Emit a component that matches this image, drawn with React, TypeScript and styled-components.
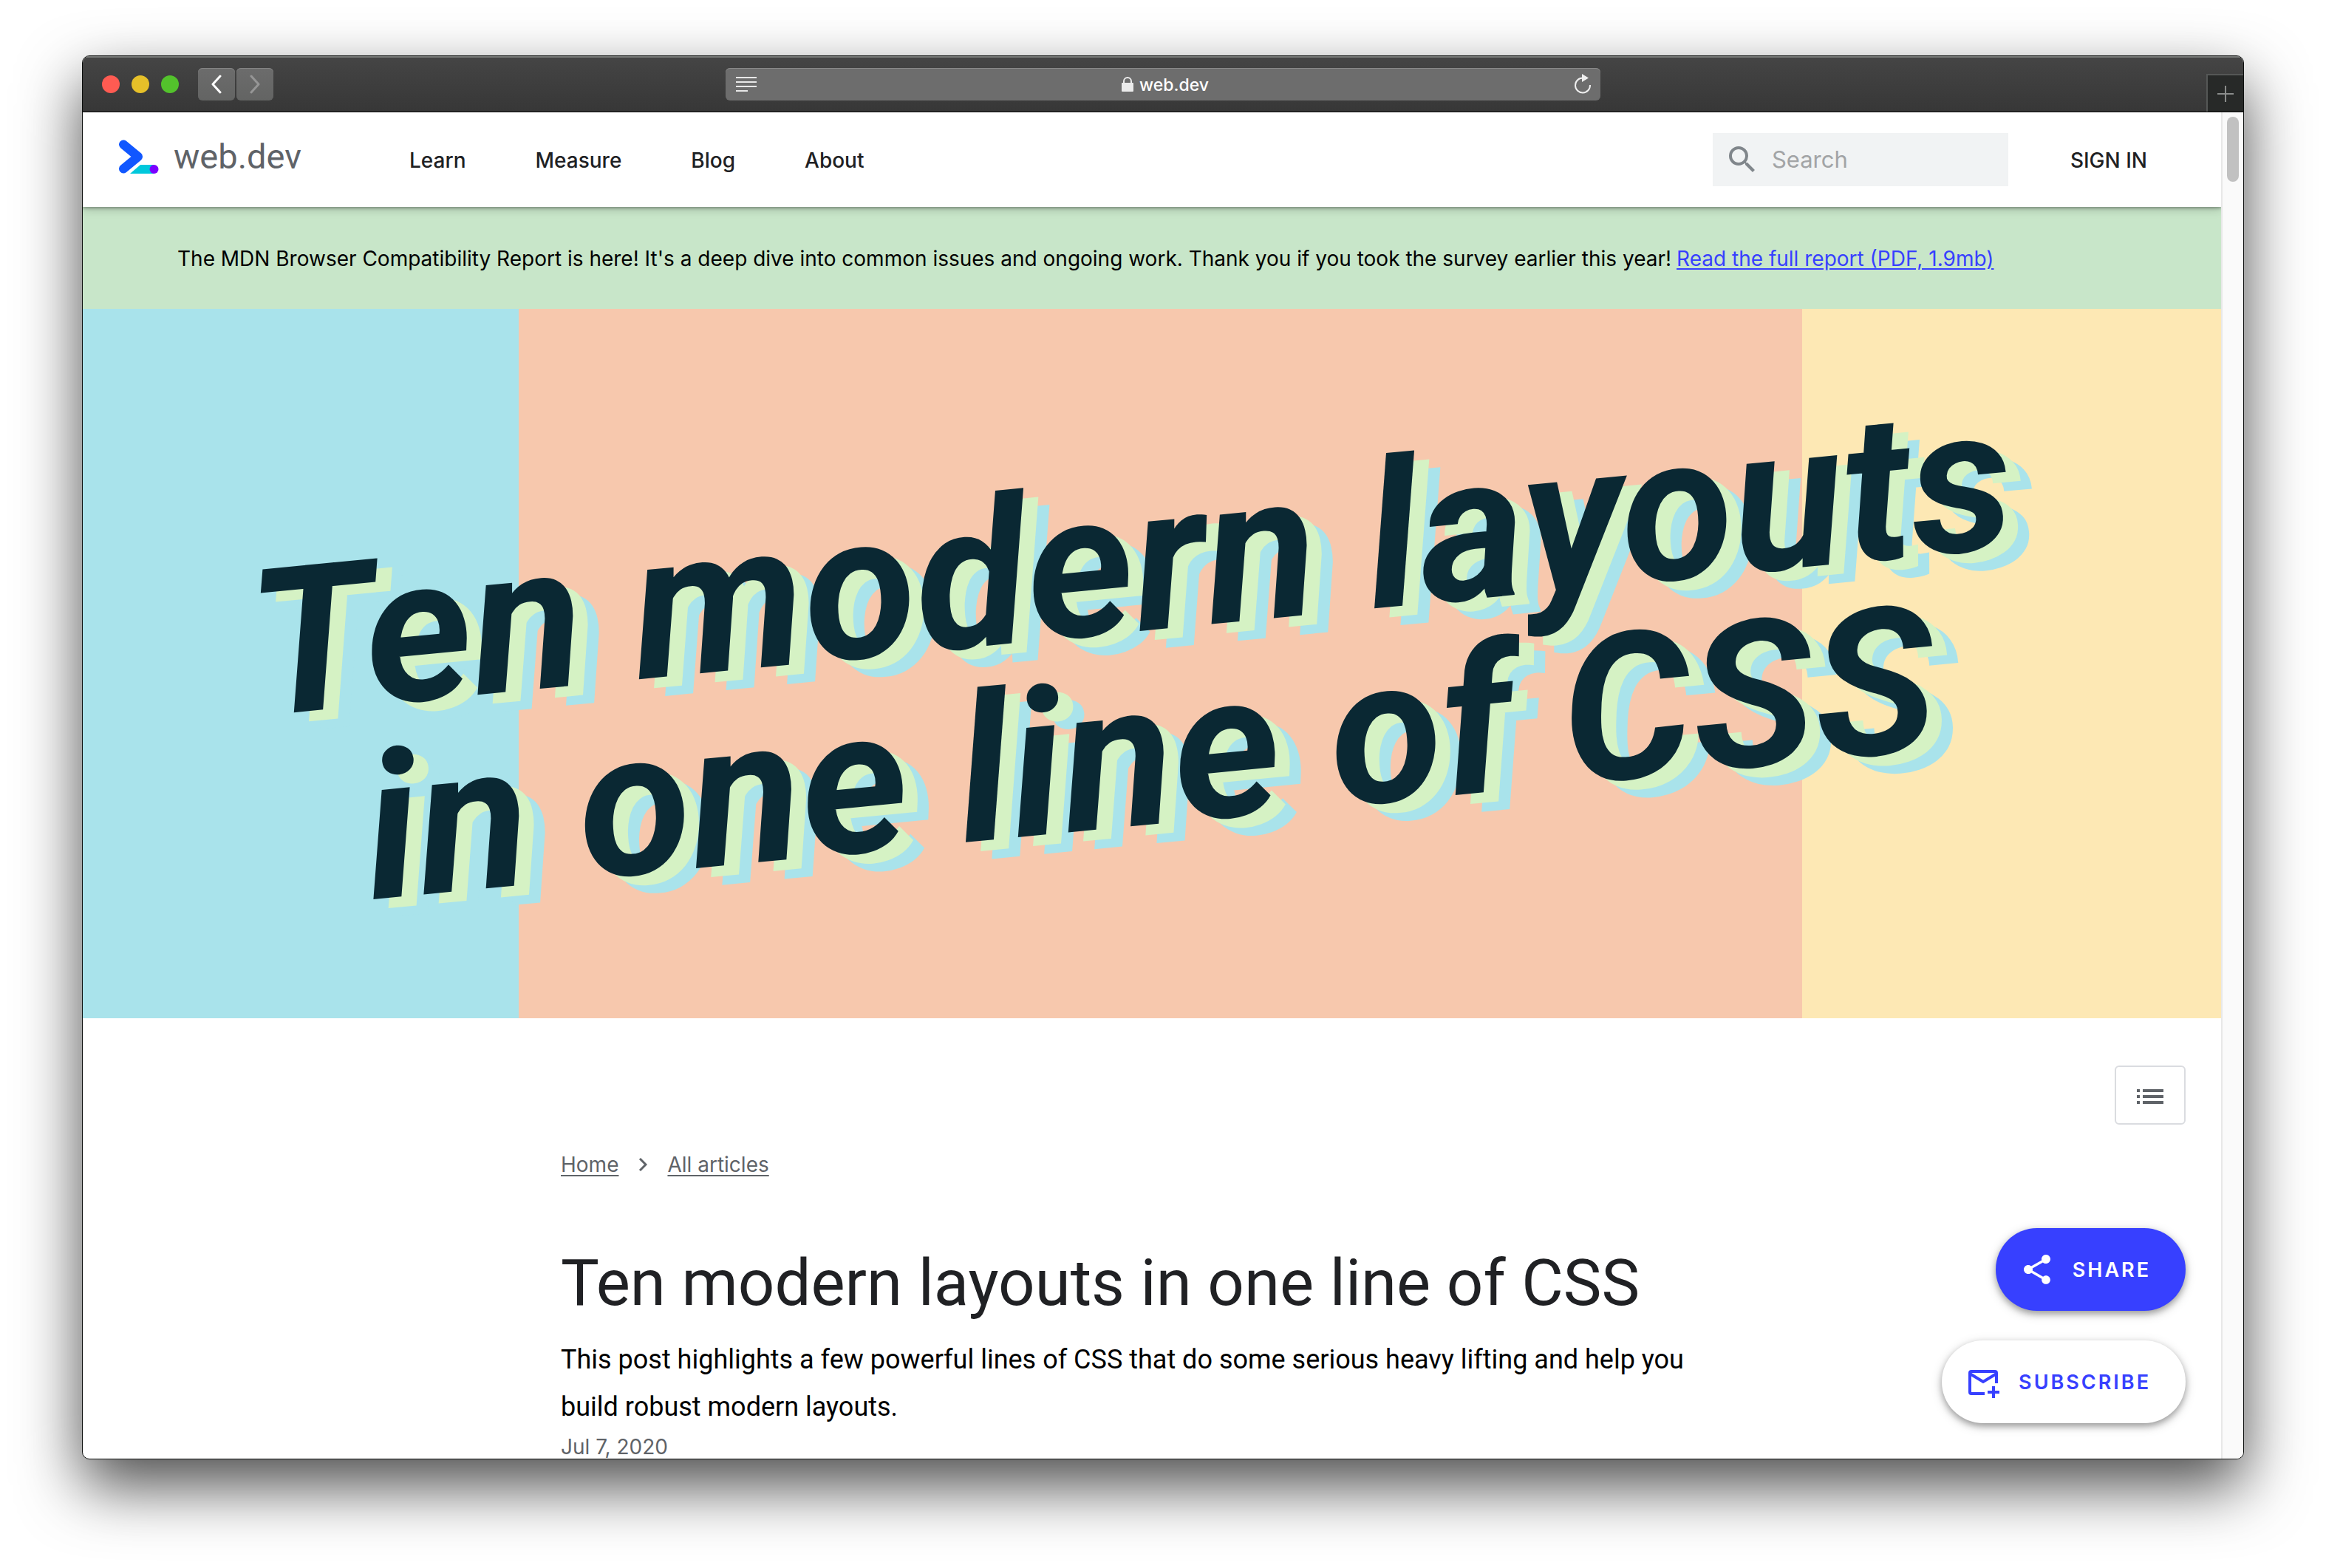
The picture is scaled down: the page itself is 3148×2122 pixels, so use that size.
import React from 'react';
import styled, { createGlobalStyle } from 'styled-components';

const uiFont = 'Inter, "Liberation Sans", sans-serif';
const displayFont = 'Roboto, "Liberation Sans", sans-serif';

const GlobalStyle = createGlobalStyle`
  *, *::before, *::after { box-sizing: border-box; }
  body { margin: 0; background: #ffffff; font-family: ${uiFont}; }
  h1, h2, p, ol { margin: 0; padding: 0; }
  a { color: inherit; }
  button { font: inherit; margin: 0; padding: 0; border: 0; cursor: pointer; }
`;

const Desktop = styled.div`
  height: 100vh;
  padding: 75px 111px 147px;
  display: flex;
`;

const BrowserWindow = styled.div`
  flex: 1;
  min-width: 0;
  display: flex;
  flex-direction: column;
  overflow: hidden;
  border: 1px solid #0c0e0d;
  border-radius: 10px;
  background: #ffffff;
  box-shadow: 0 36px 84px rgba(0, 0, 0, 0.7);
`;

const Toolbar = styled.div`
  flex: none;
  height: 76px;
  display: grid;
  grid-template-columns: 1fr 1184px 1fr;
  align-items: center;
  background: linear-gradient(#454545, #373737);
  border-bottom: 1px solid #000000;
  box-shadow: inset 0 2px 0 #767876;
`;

const ToolbarStart = styled.div`
  display: flex;
  align-items: center;
  padding-left: 26px;
`;

const Lights = styled.div`
  display: flex;
  gap: 16px;
  margin-right: 26px;
`;

const Light = styled.button<{ $color: string }>`
  width: 24px;
  height: 24px;
  border-radius: 50%;
  background: ${(p) => p.$color};
`;

const HistoryButtons = styled.div`
  display: flex;
  gap: 2px;
`;

const HistoryButton = styled.button`
  width: 50px;
  height: 44px;
  display: grid;
  place-items: center;
  border-radius: 6px;
  background: linear-gradient(#6c6c6c, #636463);
  box-shadow: inset 0 1px 0 #858585;
`;

const AddressBar = styled.div`
  height: 44px;
  padding: 0 12px 0 14px;
  display: flex;
  align-items: center;
  justify-content: space-between;
  border-radius: 6px;
  background: #6d6d6d;
  box-shadow: inset 0 1px 0 #8a8a8a;
`;

const BarButton = styled.button`
  display: flex;
  background: none;
`;

const Address = styled.div`
  padding-top: 2px;
  display: flex;
  align-items: center;
  gap: 8px;
  color: #ffffff;
  font-size: 23px;
  font-weight: 500;
  line-height: 32px;
`;

const NewTab = styled.button`
  justify-self: end;
  align-self: end;
  width: 50px;
  height: 51px;
  display: grid;
  place-items: center;
  background: #272928;
  border-top: 2px solid #555756;
  border-left: 2px solid #555756;
`;

const Viewport = styled.div`
  position: relative;
  flex: 1;
  min-height: 0;
  display: flex;
`;

const Page = styled.div`
  flex: 1;
  min-width: 0;
  overflow: hidden;
`;

const ScrollTrack = styled.div`
  flex: none;
  width: 30px;
  padding: 6px;
  background: #fafafa;
  border-left: 2px solid #e8e8e8;
`;

const ScrollThumb = styled.div`
  width: 16px;
  height: 88px;
  border-radius: 8px;
  background: #c1c1c1;
`;

const SiteHeader = styled.header`
  position: relative;
  height: 128px;
  padding: 0 48px;
  display: flex;
  align-items: center;
  background: #ffffff;
  box-shadow: 0 2px 4px rgba(0, 0, 0, 0.3), 0 4px 12px rgba(0, 0, 0, 0.16);
`;

const Brand = styled.a`
  width: 394px;
  padding-bottom: 8px;
  display: flex;
  align-items: center;
  gap: 20px;
  color: #5f6368;
  font: 400 47px/56px ${displayFont};
  text-decoration: none;
`;

const SiteNav = styled.nav`
  flex: 1;
  display: flex;
  gap: 94px;
`;

const NavLink = styled.a`
  padding-top: 2px;
  color: #202124;
  font-size: 28px;
  font-weight: 500;
  line-height: 40px;
  text-decoration: none;
`;

const SearchBox = styled.label`
  width: 400px;
  height: 72px;
  margin-right: 84px;
  padding-left: 16px;
  display: flex;
  align-items: center;
  gap: 16px;
  background: #f1f3f4;
`;

const SearchInput = styled.input`
  flex: 1;
  min-width: 0;
  height: 48px;
  padding: 0;
  border: 0;
  outline: 0;
  background: none;
  font: 400 31px/48px ${uiFont};
  color: #202124;
  &::placeholder { color: #a2a4a6; opacity: 1; }
`;

const SignIn = styled(NavLink)`
  margin-right: 52px;
`;

const Notice = styled.p`
  height: 138px;
  padding: 2px 128px 0;
  display: flex;
  align-items: center;
  gap: 7px;
  background: #c8e6c9;
  color: #000000;
  font-size: 28px;
  line-height: 48px;
  white-space: nowrap;
  a { color: #3740ff; text-underline-offset: 3px; }
`;

const Hero = styled.div`
  height: 960px;
  padding: 0 32px 14px 0;
  display: flex;
  align-items: center;
  justify-content: center;
  overflow: hidden;
  background: linear-gradient(
    to right,
    #a9e3eb 0 20.4%,
    #f7c8ad 20.4% 80.4%,
    #fde8b4 80.4%
  );
`;

const HeroTitle = styled.p`
  color: #0a2833;
  font: italic 700 277px/262px ${displayFont};
  text-align: center;
  white-space: nowrap;
  transform: rotate(-5.5deg);
  text-shadow: 19px 14px 0 #d5f2c4, 33px 26px 0 #a9e3eb;
`;

const TocRow = styled.div`
  display: flex;
  justify-content: flex-end;
  padding: 64px 48px 0;
`;

const TocButton = styled.button`
  width: 96px;
  height: 80px;
  padding-top: 4px;
  display: grid;
  place-items: center;
  background: #ffffff;
  border: 2px solid #dadce0;
  border-radius: 6px;
`;

const Article = styled.article`
  max-width: 1600px;
  margin: 0 auto;
  padding-top: 34px;
`;

const Crumbs = styled.nav`
  display: flex;
  align-items: center;
  gap: 27px;
  color: #5f6368;
  font-size: 28px;
  line-height: 40px;
  a { text-underline-offset: 4px; text-decoration-thickness: 2px; }
`;

const Title = styled.h1`
  margin-top: 84px;
  color: #202124;
  font: 400 87px/112px ${displayFont};
`;

const Lead = styled.p`
  margin-top: 16px;
  color: #000000;
  font: 400 36px/64px ${displayFont};
`;

const Published = styled.p`
  color: #5f6368;
  font-size: 28px;
  line-height: 44px;
`;

const FloatingActions = styled.div`
  position: absolute;
  right: 78px;
  bottom: 48px;
  display: flex;
  flex-direction: column;
  align-items: flex-end;
  gap: 40px;
`;

const Fab = styled.button<{ $primary?: boolean }>`
  height: 112px;
  padding: 0 47px 0 32px;
  display: flex;
  align-items: center;
  gap: 24px;
  border-radius: 56px;
  background: ${(p) => (p.$primary ? '#3740ff' : '#ffffff')};
  color: ${(p) => (p.$primary ? '#ffffff' : '#3740ff')};
  font-size: 27px;
  font-weight: 600;
  line-height: 40px;
  letter-spacing: 3px;
  box-shadow: 0 4px 8px rgba(0, 0, 0, 0.3), 0 4px 16px rgba(0, 0, 0, 0.16);
`;

const FabLabel = styled.span`
  padding-top: 2px;
`;

const navItems = ['Learn', 'Measure', 'Blog', 'About'];

export default function App() {
  return (
    <>
      <GlobalStyle />
      <Desktop>
        <BrowserWindow>
          <Toolbar>
            <ToolbarStart>
              <Lights>
                <Light $color="#ff5b52" aria-label="Close" />
                <Light $color="#e6c029" aria-label="Minimise" />
                <Light $color="#53c22c" aria-label="Zoom" />
              </Lights>
              <HistoryButtons>
                <HistoryButton aria-label="Back">
                  <svg width="16" height="26" viewBox="0 0 16 26" fill="none" stroke="#ffffff" strokeWidth="3" strokeLinecap="round" strokeLinejoin="round">
                    <path d="M13 2L3 13l10 11" />
                  </svg>
                </HistoryButton>
                <HistoryButton aria-label="Forward">
                  <svg width="16" height="26" viewBox="0 0 16 26" fill="none" stroke="#969696" strokeWidth="3" strokeLinecap="round" strokeLinejoin="round">
                    <path d="M3 2l10 11L3 24" />
                  </svg>
                </HistoryButton>
              </HistoryButtons>
            </ToolbarStart>
            <AddressBar>
              <BarButton aria-label="Reader view">
                <svg width="28" height="20" viewBox="0 0 28 20" fill="#e8e8e8">
                  <path d="M0 0h28v2H0zM0 6h28v2H0zM0 12h28v2H0zM0 18h16v2H0z" />
                </svg>
              </BarButton>
              <Address>
                <svg width="16" height="22" viewBox="0 0 16 22">
                  <path d="M3 9V6a5 5 0 0 1 10 0v3" fill="none" stroke="#ebebeb" strokeWidth="2" />
                  <rect y="8" width="16" height="12" rx="1" fill="#ebebeb" />
                </svg>
                web.dev
              </Address>
              <BarButton aria-label="Reload">
                <svg width="24" height="28" viewBox="0 0 24 28">
                  <path d="M12 5.5A10 10 0 1 0 22 15" fill="none" stroke="#efefef" strokeWidth="2" />
                  <path d="M11 0l9 5.5-9 5.5z" fill="#efefef" />
                </svg>
              </BarButton>
            </AddressBar>
            <NewTab aria-label="New tab">
              <svg width="22" height="22" viewBox="0 0 22 22" stroke="#8a8c8b" strokeWidth="2">
                <path d="M11 0v22M0 11h22" />
              </svg>
            </NewTab>
          </Toolbar>
          <Viewport>
            <Page>
              <SiteHeader>
                <Brand href="#">
                  <svg width="55" height="46" viewBox="0 0 55 46">
                    <path d="M7 6.5L27 23 7 39.5" fill="none" stroke="#1157ff" strokeWidth="12" strokeLinecap="round" strokeLinejoin="round" />
                    <path d="M30 34h18v12H16z" fill="#00c8dc" />
                    <circle cx="48.5" cy="40" r="6" fill="#7b00ff" />
                  </svg>
                  web.dev
                </Brand>
                <SiteNav>
                  {navItems.map((item) => (
                    <NavLink key={item} href="#">{item}</NavLink>
                  ))}
                </SiteNav>
                <SearchBox>
                  <svg width="48" height="48" viewBox="0 0 24 24" fill="#80868b">
                    <path d="M15.5 14h-.79l-.28-.27A6.471 6.471 0 0 0 16 9.5 6.5 6.5 0 1 0 9.5 16c1.61 0 3.09-.59 4.23-1.57l.27.28v.79l5 4.99L20.49 19l-4.99-5zm-6 0C7.01 14 5 11.99 5 9.5S7.01 5 9.5 5 14 7.01 14 9.5 11.99 14 9.5 14z" />
                  </svg>
                  <SearchInput type="search" placeholder="Search" aria-label="Search" />
                </SearchBox>
                <SignIn href="#">SIGN IN</SignIn>
              </SiteHeader>
              <Notice>
                <span>The MDN Browser Compatibility Report is here! It's a deep dive into common issues and ongoing work. Thank you if you took the survey earlier this year!</span>
                <a href="#">Read the full report (PDF, 1.9mb)</a>
              </Notice>
              <Hero>
                <HeroTitle>
                  Ten modern layouts
                  <br />
                  in one line of CSS
                </HeroTitle>
              </Hero>
              <TocRow>
                <TocButton aria-label="Table of contents">
                  <svg width="36" height="20" viewBox="0 0 36 20" fill="#5f6368">
                    <path d="M0 0h4v4H0zM8 0h28v4H8zM0 8h4v4H0zM8 8h28v4H8zM0 16h4v4H0zM8 16h28v4H8z" />
                  </svg>
                </TocButton>
              </TocRow>
              <Article>
                <Crumbs aria-label="Breadcrumb">
                  <a href="#">Home</a>
                  <svg width="12" height="18" viewBox="0 0 12 18" fill="none" stroke="#5f6368" strokeWidth="3">
                    <path d="M2 1l8 8-8 8" />
                  </svg>
                  <a href="#">All articles</a>
                </Crumbs>
                <Title>Ten modern layouts in one line of CSS</Title>
                <Lead>
                  This post highlights a few powerful lines of CSS that do some serious heavy lifting and help you build robust modern layouts.
                </Lead>
                <Published>Jul 7, 2020</Published>
              </Article>
            </Page>
            <ScrollTrack>
              <ScrollThumb />
            </ScrollTrack>
            <FloatingActions>
              <Fab $primary>
                <svg width="48" height="48" viewBox="0 0 24 24" fill="#ffffff">
                  <path d="M18 16.08c-.76 0-1.44.3-1.96.77L8.91 12.7c.05-.23.09-.46.09-.7s-.04-.47-.09-.7l7.05-4.11c.54.5 1.25.81 2.04.81 1.66 0 3-1.34 3-3s-1.34-3-3-3-3 1.34-3 3c0 .24.04.47.09.7L8.04 9.81C7.5 9.31 6.79 9 6 9c-1.66 0-3 1.34-3 3s1.34 3 3 3c.79 0 1.5-.31 2.04-.81l7.12 4.16c-.05.21-.08.43-.08.65 0 1.61 1.31 2.92 2.92 2.92s2.92-1.31 2.92-2.92-1.31-2.92-2.92-2.92z" />
                </svg>
                <FabLabel>SHARE</FabLabel>
              </Fab>
              <Fab>
                <svg width="48" height="48" viewBox="0 0 48 48" fill="none" stroke="#3740ff" strokeWidth="4">
                  <path d="M26 40H8a2 2 0 0 1-2-2V12a2 2 0 0 1 2-2h32a2 2 0 0 1 2 2v14" />
                  <path d="M6 13l18 11 18-11" />
                  <path d="M38 30v16M30 38h16" />
                </svg>
                <FabLabel>SUBSCRIBE</FabLabel>
              </Fab>
            </FloatingActions>
          </Viewport>
        </BrowserWindow>
      </Desktop>
    </>
  );
}
